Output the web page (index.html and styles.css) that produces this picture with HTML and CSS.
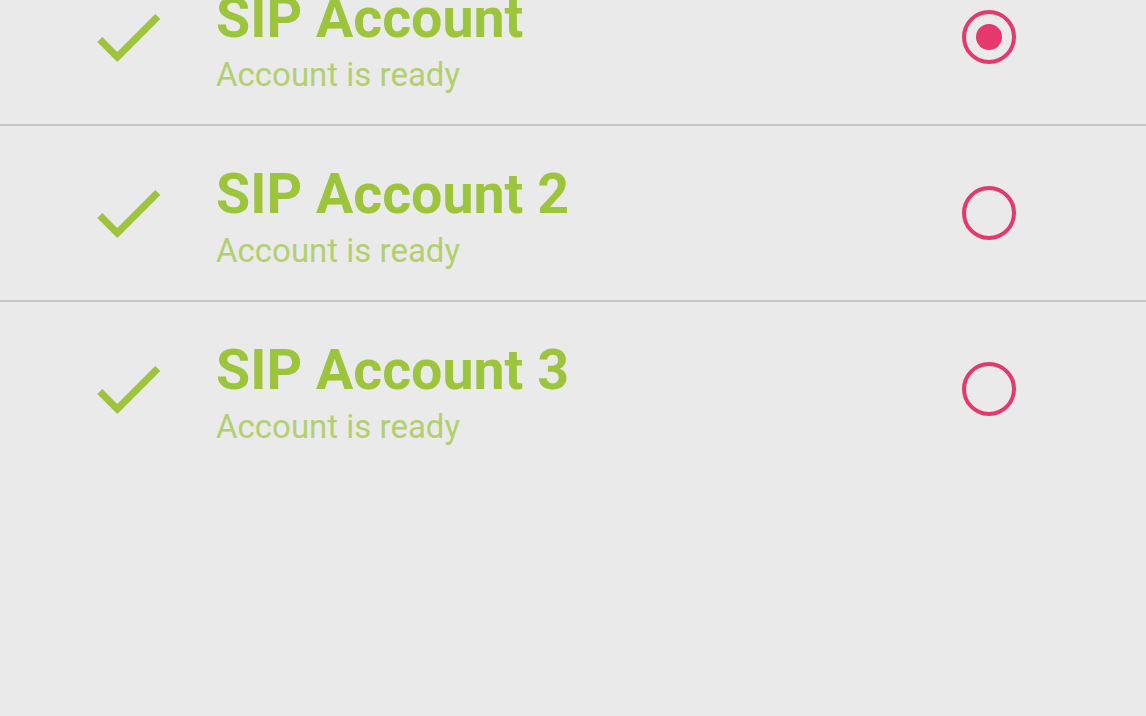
FILE: index.html
```html
<!DOCTYPE html>
<html lang="en">

<head>
    <meta charset="UTF-8">
    <meta name="viewport" content="width=device-width, initial-scale=1.0">
    <title>SIP Accounts</title>
    <link rel="stylesheet" href="styles.css">
</head>

<body>

    <ul class="account-list">
        <li class="account">
            <svg class="check" viewBox="0 0 24 24"><path d="M9 16.17L4.83 12l-1.42 1.41L9 19 21 7l-1.41-1.41z"/></svg>
            <div class="info">
                <div class="name">SIP Account</div>
                <div class="status">Account is ready</div>
            </div>
            <svg class="radio" viewBox="0 0 60 60"><circle class="ring" cx="30" cy="30" r="25"/><circle class="dot" cx="30" cy="30" r="13"/></svg>
        </li>
        <li class="account">
            <svg class="check" viewBox="0 0 24 24"><path d="M9 16.17L4.83 12l-1.42 1.41L9 19 21 7l-1.41-1.41z"/></svg>
            <div class="info">
                <div class="name">SIP Account 2</div>
                <div class="status">Account is ready</div>
            </div>
            <svg class="radio" viewBox="0 0 60 60"><circle class="ring" cx="30" cy="30" r="25"/></svg>
        </li>
        <li class="account last">
            <svg class="check" viewBox="0 0 24 24"><path d="M9 16.17L4.83 12l-1.42 1.41L9 19 21 7l-1.41-1.41z"/></svg>
            <div class="info">
                <div class="name">SIP Account 3</div>
                <div class="status">Account is ready</div>
            </div>
            <svg class="radio" viewBox="0 0 60 60"><circle class="ring" cx="30" cy="30" r="25"/></svg>
        </li>
    </ul>

</body>

</html>
```

FILE: styles.css
```css
body {
    margin: 0;
    padding: 0;
    background-color: #eaeaea;
    font-family: Roboto, "Liberation Sans", sans-serif;
    overflow: hidden;
}

.account-list {
    list-style: none;
    margin: -50px 0 0;
    padding: 0;
}

.account {
    display: flex;
    align-items: center;
    height: 174px;
    border-bottom: 2px solid #c6c6c6;
}

.account.last {
    border-bottom: none;
}

.check {
    width: 86px;
    height: 86px;
    margin-left: 85px;
    fill: #9cc53c;
    flex-shrink: 0;
}

.info {
    flex: 1;
    margin-left: 45px;
    padding-top: 9px;
    display: flex;
    flex-direction: column;
}

.name {
    font-size: 55.5px;
    font-weight: 700;
    line-height: 60px;
    color: #9cc53c;
}

.status {
    font-size: 33px;
    line-height: 40px;
    color: #b3d070;
    margin-top: 6px;
}

.radio {
    width: 60px;
    height: 60px;
    margin-right: 127px;
    flex-shrink: 0;
}

.ring {
    fill: none;
    stroke: #e6386c;
    stroke-width: 4;
}

.dot {
    fill: #e6386c;
}
```
